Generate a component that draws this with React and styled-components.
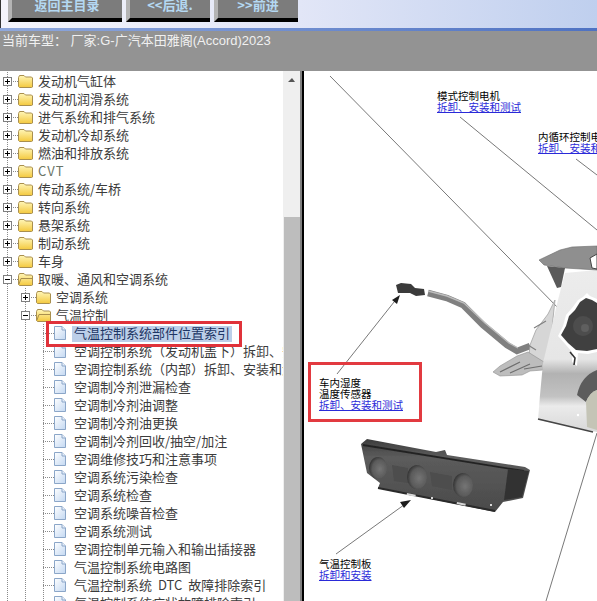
import React from 'react';
import styled, { createGlobalStyle } from 'styled-components';

const GlobalStyle = createGlobalStyle`
  html, body {
    margin: 0;
    padding: 0;
    background: #fff;
    overflow: hidden;
  }
`;

const Page = styled.div`
  width: 597px;
  height: 601px;
  display: flex;
  flex-direction: column;
  overflow: hidden;
  font-family: 'Noto Sans CJK SC', 'Liberation Sans', sans-serif;
`;

const Toolbar = styled.div`
  height: 28px;
  flex: none;
  display: flex;
  gap: 4px;
  padding-left: 8px;
  box-sizing: border-box;
  overflow: hidden;
  background: linear-gradient(to right, #f4f4fb 0%, #e2e6f7 50%, #bfcfee 100%);
  border-left: 1px solid #333;
`;

const NavButton = styled.div`
  width: ${({ $w }) => $w}px;
  height: 22px;
  margin-left: ${({ $first }) => ($first ? '-1px' : '0')};
  box-sizing: border-box;
  display: flex;
  align-items: center;
  justify-content: center;
  background: #7c7c7c;
  border-left: 4px solid #b4b4b4;
  border-bottom: 4px solid #000;
  color: #b4d8f2;
  font-size: 13px;
  font-weight: 700;
  line-height: 14px;
  padding-bottom: 9px;
  white-space: nowrap;
`;

const InfoBand = styled.div`
  height: 43px;
  flex: none;
  box-sizing: border-box;
  background: #939393;
  border-top: 3px solid #6d8ed4;
  border-image: linear-gradient(to right, #8fa8dc, #4f72c2) 1;
  padding: 1px 0 0 2px;
  color: #f0f0f0;
  font-family: 'Liberation Sans', 'Noto Sans CJK SC', sans-serif;
  font-size: 13px;
  line-height: 18px;
  white-space: pre;
`;

const Body = styled.div`
  flex: 1;
  display: flex;
  min-height: 0;
`;

const TreePane = styled.div`
  width: 300px;
  flex: none;
  display: flex;
  overflow: hidden;
`;

const TreeList = styled.div`
  width: 283px;
  flex: none;
  padding-top: 1px;
  overflow: hidden;
`;

const Row = styled.div`
  height: 18px;
  display: flex;
  align-items: flex-start;
  white-space: nowrap;
`;

const Guide = styled.span`
  width: 18px;
  height: 18px;
  flex: none;
  background: repeating-linear-gradient(to bottom, #8a8a8a 0 1px, transparent 1px 2px) 7px 0 / 1px 100% no-repeat;
`;

const Toggle = styled.span`
  width: 18px;
  height: 18px;
  flex: none;
  display: flex;
  align-items: center;
  background:
    repeating-linear-gradient(to bottom, #8a8a8a 0 1px, transparent 1px 2px) 7px 0 / 1px 100% no-repeat,
    repeating-linear-gradient(to right, #8a8a8a 0 1px, transparent 1px 2px) 7px 9px / 11px 1px no-repeat;
`;

const Box = styled.svg`
  display: block;
  margin-left: 3px;
  background: #fff;
`;

const IconSlot = styled.span`
  width: ${({ $w }) => $w}px;
  height: 18px;
  flex: none;
  display: flex;
  align-items: center;
  & svg {
    display: block;
  }
`;

const Label = styled.span`
  margin: 1px 0 0 ${({ $gap }) => $gap}px;
  padding: 0 2px 1px;
  font-size: 13px;
  line-height: 16px;
  word-spacing: 3px;
  letter-spacing: ${({ $dim }) => ($dim ? '1px' : '0')};
  color: ${({ $selected, $dim }) => ($selected ? '#1d3564' : $dim ? '#6a7466' : '#3c3c3c')};
  background: ${({ $selected }) => ($selected ? 'linear-gradient(transparent 1px, #bccfe9 1px)' : 'none')};
`;

const Scrollbar = styled.div`
  flex: 1;
  display: flex;
  flex-direction: column;
  align-items: stretch;
  background: #efefef;
`;

const ScrollArrow = styled.div`
  height: 16px;
  display: flex;
  justify-content: center;
  padding-top: 7px;
  box-sizing: border-box;
  &::before {
    content: '';
    width: 0;
    height: 0;
    border-left: 4px solid transparent;
    border-right: 3px solid transparent;
    border-bottom: 4px solid #555;
  }
`;

const ScrollThumb = styled.div`
  margin-top: 130px;
  flex: 1;
  margin-left: 1px;
  background: #bdbdbd;
`;

const Splitter = styled.div`
  width: 4px;
  flex: none;
  box-sizing: border-box;
  background: #000;
  border-left: 2px solid #808080;
`;

const Diagram = styled.div`
  position: relative;
  flex: 1;
  overflow: hidden;
  background: #fff;
`;

const Art = styled.svg`
  position: absolute;
  left: 0;
  top: 0;
  display: block;
`;

const Callout = styled.div`
  position: absolute;
  left: ${({ $x }) => $x}px;
  top: ${({ $y }) => $y}px;
  font-size: 10.5px;
  line-height: 11px;
  color: #000;
  white-space: nowrap;
`;

const CalloutLink = styled.a`
  display: block;
  color: #2a2ad8;
  text-decoration: underline;
`;

const Marker = styled.div`
  position: absolute;
  left: 4px;
  top: 291px;
  width: 114px;
  height: 60px;
  box-sizing: border-box;
  border: 3px solid #e23a40;
`;

const RowMarker = styled.div`
  position: absolute;
  left: 46px;
  top: 321px;
  width: 196px;
  height: 26px;
  box-sizing: border-box;
  border: 3px solid #e0323a;
`;

const PlusMinus = ({ open }) => (
  <Box width="9" height="9" viewBox="0 0 9 9">
    <rect x="0.5" y="0.5" width="8" height="8" fill="#fff" stroke="#7f7f7f" />
    <path d={open ? 'M2 4.5h5' : 'M2 4.5h5M4.5 2v5'} stroke="#000" fill="none" />
  </Box>
);

const Folder = ({ open }) => (
  <svg width="15" height="16" viewBox="0 0 15 16">
    <defs>
      <linearGradient id="fold" x1="0" y1="0" x2="0" y2="1">
        <stop offset="0" stopColor="#fff6b8" />
        <stop offset="1" stopColor="#f4c93e" />
      </linearGradient>
    </defs>
    <path d="M0.5 4.5 L1.5 2.5 H6 L7.5 4 H13.5 L14.5 5 V14 L13.5 14.5 H1.5 L0.5 13.5 Z" fill="url(#fold)" stroke="#a98f4e" />
    {open && <path d="M3 7.5 H14 M3 7.5 L0.8 13.5" stroke="#a98f4e" fill="none" />}
  </svg>
);

const PageIcon = () => (
  <svg width="12" height="16" viewBox="0 0 12 16">
    <defs>
      <linearGradient id="sheet" x1="0" y1="0" x2="1" y2="1">
        <stop offset="0" stopColor="#ffffff" />
        <stop offset="1" stopColor="#c3d8f2" />
      </linearGradient>
    </defs>
    <path d="M0.5 1.5 H8 L11.5 5 V14.5 H0.5 Z" fill="url(#sheet)" stroke="#8ba6c8" />
    <path d="M8 1.5 V5 H11.5" fill="#e8f0fb" stroke="#8ba6c8" />
  </svg>
);

const tree = [
  { level: 0, text: '发动机气缸体' },
  { level: 0, text: '发动机润滑系统' },
  { level: 0, text: '进气系统和排气系统' },
  { level: 0, text: '发动机冷却系统' },
  { level: 0, text: '燃油和排放系统' },
  { level: 0, text: 'CVT', dim: true },
  { level: 0, text: '传动系统/车桥' },
  { level: 0, text: '转向系统' },
  { level: 0, text: '悬架系统' },
  { level: 0, text: '制动系统' },
  { level: 0, text: '车身' },
  { level: 0, text: '取暖、通风和空调系统', open: true },
  { level: 1, text: '空调系统' },
  { level: 1, text: '气温控制', open: true },
  { level: 2, text: '气温控制系统部件位置索引', selected: true },
  { level: 2, text: '空调控制系统（发动机盖下）拆卸、安装和测试' },
  { level: 2, text: '空调控制系统（内部）拆卸、安装和测试' },
  { level: 2, text: '空调制冷剂泄漏检查' },
  { level: 2, text: '空调制冷剂油调整' },
  { level: 2, text: '空调制冷剂油更换' },
  { level: 2, text: '空调制冷剂回收/抽空/加注' },
  { level: 2, text: '空调维修技巧和注意事项' },
  { level: 2, text: '空调系统污染检查' },
  { level: 2, text: '空调系统检查' },
  { level: 2, text: '空调系统噪音检查' },
  { level: 2, text: '空调系统测试' },
  { level: 2, text: '空调控制单元输入和输出插接器' },
  { level: 2, text: '气温控制系统电路图' },
  { level: 2, text: '气温控制系统 DTC 故障排除索引' },
  { level: 2, text: '气温控制系统症状故障排除索引' },
];

const TreeRow = ({ item }) => {
  const isLeaf = item.level === 2;
  return (
    <Row>
      {Array.from({ length: item.level }, (_, i) => <Guide key={i} />)}
      {isLeaf ? (
        <>
          <Toggle />
          <IconSlot $w={12}><PageIcon /></IconSlot>
        </>
      ) : (
        <>
          <Toggle><PlusMinus open={item.open} /></Toggle>
          <IconSlot $w={15}><Folder open={item.open} /></IconSlot>
        </>
      )}
      <Label $gap={isLeaf ? 6 : 3} $selected={item.selected} $dim={item.dim}>{item.text}</Label>
    </Row>
  );
};

// viewBox uses page coordinates, the pane starts at 304,71
const Machinery = () => (
  <Art width="293" height="530" viewBox="304 71 293 530">
    <defs>
      <filter id="soft"><feGaussianBlur stdDeviation="0.5" /></filter>
      <linearGradient id="shell" x1="0" y1="0" x2="0" y2="1">
        <stop offset="0" stopColor="#ececec" />
        <stop offset="0.55" stopColor="#e6e6e6" />
        <stop offset="0.64" stopColor="#b2b2b2" />
        <stop offset="0.78" stopColor="#c2c2c2" />
        <stop offset="0.84" stopColor="#ebebeb" />
        <stop offset="1" stopColor="#d8d8d8" />
      </linearGradient>
      <radialGradient id="knob" cx="0.6" cy="0.55" r="0.6">
        <stop offset="0" stopColor="#757575" />
        <stop offset="0.7" stopColor="#5a5a5a" />
        <stop offset="1" stopColor="#343434" />
      </radialGradient>
      <linearGradient id="panel" x1="0" y1="0" x2="0" y2="1">
        <stop offset="0" stopColor="#3c3c3c" />
        <stop offset="0.25" stopColor="#5c5c5c" />
        <stop offset="1" stopColor="#4a4a4a" />
      </linearGradient>
    </defs>

    <g stroke="#555" strokeWidth="0.8" fill="none">
      <path d="M330 76 L564 314" />
      <path d="M460 117 L597 230" />
      <path d="M576 159 L597 175" />
      <path d="M337 374 L398 297" />
      <path d="M336 554 L408 502" />
      <path d="M597 433 L546 601" />
    </g>
    <g fill="#1c1c1c">
      <path d="M567 317 L559 313 L563 309 Z" />
      <path d="M400 295 L397 304 L392 300 Z" />
      <path d="M411 500 L404 508 L400 502 Z" />
    </g>

    <g filter="url(#soft)">
      {/* cabin sensor and its hose */}
      <path d="M396 285 L401 283 L411 284 L415 288 L424 289 L425 295 L416 296 L410 293 L398 293 Z" fill="#3a3a3a" />
      <path d="M428 293 L447 298 L463 305 L483 325 L507 345 L517 351 L530 346" fill="none" stroke="#808080" strokeWidth="6.5" />
      <path d="M428 291 L447 296 L464 303 L485 323 L509 343 L518 348" fill="none" stroke="#bdbdbd" strokeWidth="1.4" />

      {/* flange and duct on the left of the case */}
      <path d="M530 345 L536 330 L548 314 L555 300 L548 366 L528 366 Z" fill="#d6d6d6" stroke="#9a9a9a" strokeWidth="0.7" />
      <path d="M534 328 L546 321 M528 345 L536 350" stroke="#808080" strokeWidth="1.2" fill="none" />
      <path d="M493 372 L500 366 L517 356 L528 352 L544 362 L543 370 L530 371 L522 375 L500 376 Z" fill="#bdbdbd" stroke="#8f8f8f" strokeWidth="0.6" />
      <path d="M500 372 L520 362 M510 373 L530 364 M524 369 L542 366" stroke="#6e6e6e" strokeWidth="1.2" fill="none" />

      {/* main housing */}
      <path d="M565 273 L597 270 L597 432 L538 420 L540 395 L543 363 L558 300 Z" fill="url(#shell)" />
      <path d="M538 419 L593 432" stroke="#444" strokeWidth="1.6" fill="none" />
      <circle cx="578" cy="415" r="1.2" fill="#fff" />

      {/* top cap */}
      <path d="M539 260 L560 250 L572 247 L597 246 L597 270 L565 268 L544 265 Z" fill="#8f8f8f" stroke="#6b6b6b" strokeWidth="0.6" />
      <path d="M547 266 L565 268 L561 287 L557 288 Z" fill="#5a5a5a" />
      <path d="M590 258 L597 254 L597 269 L592 268 Z" fill="#fff" stroke="#444" />

      {/* mode motor, white halo under it */}
      <path d="M578 300 L583 297 L587 293 L590 296 L597 299 L597 352 L588 354 L578 353 L577 366 L572 362 L572 352 L566 345 L558 336 L563 326 L566 315 L572 308 Z" fill="#fff" />
      <path d="M580 302 L586 298 L592 300 L597 303 L597 349 L587 351 L576 350 L568 343 L561 335 L566 326 L569 316 L575 310 Z" fill="#414141" />
      <circle cx="583" cy="326" r="10" fill="#4e4e4e" />
      <circle cx="585" cy="328" r="4" fill="#5e5e5e" />
      <path d="M570 352 L575 358 L574 365" fill="none" stroke="#333" strokeWidth="1.6" />

      {/* lower right assembly */}
      <path d="M577 395 Q581 376 597 370 L597 390 Q590 392 586 402 Z" fill="#5c5c5c" />
      <path d="M586 402 Q590 392 597 390 L597 430 L587 427 Z" fill="#c4c4b6" />

      {/* climate control panel */}
      <path d="M361 444 L367 439 L436 452 L445 450 L447 455 L525 467 L530 470 L523 498 L503 502 L495 512 L378 488 L380 483 L367 473 Z" fill="url(#panel)" />
      <path d="M363 445 L524 471" stroke="#242424" strokeWidth="1.8" fill="none" />
      <path d="M378 488 L495 511" stroke="#2a2a2a" strokeWidth="1.8" fill="none" />
      <path d="M508 469 L529 471 L522 497 L504 500 Z" fill="#333" />
      <path d="M392 465 L408 468 L408 483 L394 481 Z M430 472 L452 476 L452 490 L432 486 Z" fill="#4d4d4d" />
      <ellipse cx="378" cy="468" rx="9" ry="11" fill="url(#knob)" />
      <ellipse cx="417" cy="477" rx="10" ry="12" fill="url(#knob)" />
      <ellipse cx="463" cy="485" rx="10" ry="12" fill="url(#knob)" />
      <g fill="#d6d6d6">
        <rect x="407" y="493" width="9" height="2" transform="rotate(12 407 493)" />
        <rect x="457" y="502" width="9" height="2" transform="rotate(12 457 502)" />
        <rect x="431" y="497" width="2" height="2" />
        <rect x="490" y="504" width="2" height="2" />
      </g>
    </g>
  </Art>
);

const callouts = [
  { x: 133, y: 19, lines: ['模式控制电机'], link: '拆卸、安装和测试' },
  { x: 234, y: 60, lines: ['内循环控制电机'], link: '拆卸、安装和测试' },
  { x: 15, y: 306, lines: ['车内湿度', '温度传感器'], link: '拆卸、安装和测试' },
  { x: 15, y: 487, lines: ['气温控制板'], link: '拆卸和安装' },
];

export default function App() {
  return (
    <Page>
      <GlobalStyle />
      <Toolbar>
        <NavButton $w={114} $first>返回主目录</NavButton>
        <NavButton $w={84}>&lt;&lt;后退.</NavButton>
        <NavButton $w={84}>&gt;&gt;前进</NavButton>
      </Toolbar>
      <InfoBand>当前车型： 厂家:G-广汽本田雅阁(Accord)2023</InfoBand>
      <Body>
        <TreePane>
          <TreeList>
            {tree.map((item) => <TreeRow key={item.text} item={item} />)}
          </TreeList>
          <Scrollbar>
            <ScrollArrow />
            <ScrollThumb />
          </Scrollbar>
        </TreePane>
        <RowMarker />
        <Splitter />
        <Diagram>
          <Machinery />
          {callouts.map((c) => (
            <Callout key={c.lines[0]} $x={c.x} $y={c.y}>
              {c.lines.map((line) => <div key={line}>{line}</div>)}
              <CalloutLink>{c.link}</CalloutLink>
            </Callout>
          ))}
          <Marker />
        </Diagram>
      </Body>
    </Page>
  );
}
